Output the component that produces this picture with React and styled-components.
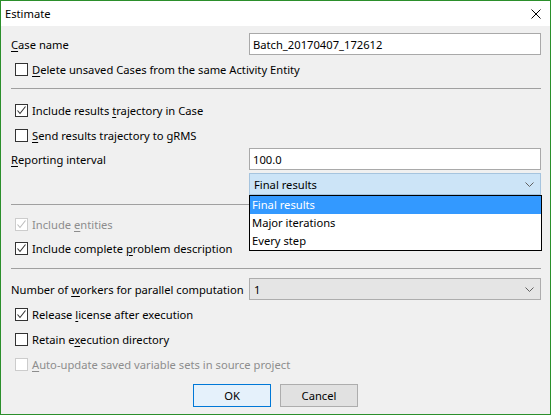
import React from 'react';
import styled, { createGlobalStyle } from 'styled-components';

const GlobalStyle = createGlobalStyle`
    html, body {
        margin: 0;
        padding: 0;
        background: #f0f0f0;
    }
    * {
        box-sizing: border-box;
    }
`;

const Window = styled.div`
    width: 551px;
    height: 415px;
    border: 1px solid #2b8f2b;
    background: #f0f0f0;
    font-family: "Noto Sans", "Segoe UI", sans-serif;
    font-size: 11.2px;
    color: #000;
    display: flex;
    flex-direction: column;
`;

const TitleBar = styled.div`
    height: 25px;
    background: #fff;
    display: flex;
    align-items: center;
    justify-content: space-between;
    padding: 0 9px 0 4px;
`;

const Body = styled.div`
    flex: 1;
    padding: 0 9px 0 9px;
    display: flex;
    flex-direction: column;
`;

const FieldRow = styled.div`
    display: flex;
    align-items: center;
    height: 22px;
    margin-top: ${(p) => p.$top || 0}px;
    position: relative;
`;

const Label = styled.span`
    width: 239px;
    white-space: nowrap;
    padding-left: 1px;
`;

const Spacer = styled.span`
    width: 239px;
`;

const TextBox = styled.div`
    flex: 1;
    height: 22px;
    background: #fff;
    border: 1px solid #a9a9a9;
    display: flex;
    align-items: center;
    padding-left: 3px;
`;

const Combo = styled.div`
    flex: 1;
    height: 22px;
    background: ${(p) => (p.$active ? '#cce4f7' : '#e5e5e5')};
    border: 1px solid ${(p) => (p.$active ? '#a6c4de' : '#adadad')};
    display: flex;
    align-items: center;
    justify-content: space-between;
    padding: 0 6px 0 4px;
`;

const DropList = styled.div`
    position: absolute;
    top: 22px;
    left: 239px;
    right: -1px;
    background: #fff;
    border: 1px solid #000;
    z-index: 2;
`;

const DropItem = styled.div`
    height: 18px;
    line-height: 18px;
    padding-left: 2px;
    background: ${(p) => (p.$selected ? '#3399ff' : '#fff')};
    color: ${(p) => (p.$selected ? '#fff' : '#000')};
`;

const CheckRow = styled.label`
    display: flex;
    align-items: center;
    height: 25px;
    padding-left: 5px;
    margin-top: ${(p) => p.$top || 0}px;
    color: ${(p) => (p.$disabled ? '#8d8d8d' : '#000')};
    white-space: nowrap;
`;

const Box = styled.span`
    width: 13px;
    height: 13px;
    border: 1px solid ${(p) => (p.$disabled ? '#cccccc' : '#333')};
    background: #fff;
    margin-right: 4px;
    display: flex;
    align-items: center;
    justify-content: center;
    flex-shrink: 0;
`;

const Separator = styled.div`
    height: 1px;
    background: #a0a0a0;
    margin-top: ${(p) => p.$top || 0}px;
    margin-left: 1px;
`;

const ButtonRow = styled.div`
    display: flex;
    justify-content: center;
    gap: 9px;
    margin-top: 7px;
`;

const Button = styled.button`
    width: 78px;
    height: 23px;
    font: inherit;
    color: #000;
    background: ${(p) => (p.$primary ? '#e5f1fb' : '#e1e1e1')};
    border: 1px solid ${(p) => (p.$primary ? '#0078d7' : '#adadad')};
    padding: 0;
`;

const Key = styled.u`
    text-decoration: underline;
    text-underline-offset: 2px;
`;

const CheckMark = ({ color }) => (
    <svg width="11" height="11" viewBox="0 0 11 11">
        <path d="M1.5 5.5 L4 8.5 L9.5 1.5" fill="none" stroke={color} strokeWidth="1.1" />
    </svg>
);

const Chevron = () => (
    <svg width="9" height="5" viewBox="0 0 9 5">
        <path d="M0.5 0.5 L4.5 4.5 L8.5 0.5" fill="none" stroke="#606060" strokeWidth="1" />
    </svg>
);

const Check = ({ checked, disabled, top, children }) => (
    <CheckRow $top={top} $disabled={disabled}>
        <Box $disabled={disabled}>
            {checked && <CheckMark color={disabled ? '#bcbcbc' : '#333'} />}
        </Box>
        {children}
    </CheckRow>
);

const App = () => {
    return (
        <>
            <GlobalStyle />
            <Window>
                <TitleBar>
                    <span>Estimate</span>
                    <svg width="10" height="10" viewBox="0 0 10 10">
                        <path d="M0.5 0.5 L9.5 9.5 M9.5 0.5 L0.5 9.5" stroke="#000" strokeWidth="1" />
                    </svg>
                </TitleBar>
                <Body>
                    <FieldRow $top={7}>
                        <Label><Key>C</Key>ase name</Label>
                        <TextBox>Batch_20170407_172612</TextBox>
                    </FieldRow>
                    <Check top={2}><span><Key>D</Key>elete unsaved Cases from the same Activity Entity</span></Check>
                    <Separator $top={6} />
                    <Check checked top={9}><span>Include results <Key>t</Key>rajectory in Case</span></Check>
                    <Check><span><Key>S</Key>end results trajectory to gRMS</span></Check>
                    <FieldRow>
                        <Label><Key>R</Key>eporting interval</Label>
                        <TextBox>100.0</TextBox>
                    </FieldRow>
                    <FieldRow $top={3}>
                        <Spacer />
                        <Combo $active>
                            <span>Final results</span>
                            <Chevron />
                        </Combo>
                        <DropList>
                            <DropItem $selected>Final results</DropItem>
                            <DropItem>Major iterations</DropItem>
                            <DropItem>Every step</DropItem>
                        </DropList>
                    </FieldRow>
                    <Separator $top={9} />
                    <Check checked disabled top={7}><span>Include <Key>e</Key>ntities</span></Check>
                    <Check checked top={-1}><span>Include complete <Key>p</Key>roblem description</span></Check>
                    <Separator $top={7} />
                    <FieldRow $top={9}>
                        <Label>Number of <Key>w</Key>orkers for parallel computation</Label>
                        <Combo>
                            <span>1</span>
                            <Chevron />
                        </Combo>
                    </FieldRow>
                    <Check checked top={2}><span>Release <Key>l</Key>icense after execution</span></Check>
                    <Check><span>Retain e<Key>x</Key>ecution directory</span></Check>
                    <Check disabled><span><Key>A</Key>uto-update saved variable sets in source project</span></Check>
                    <ButtonRow>
                        <Button $primary>OK</Button>
                        <Button>Cancel</Button>
                    </ButtonRow>
                </Body>
            </Window>
        </>
    );
};

export default App;
